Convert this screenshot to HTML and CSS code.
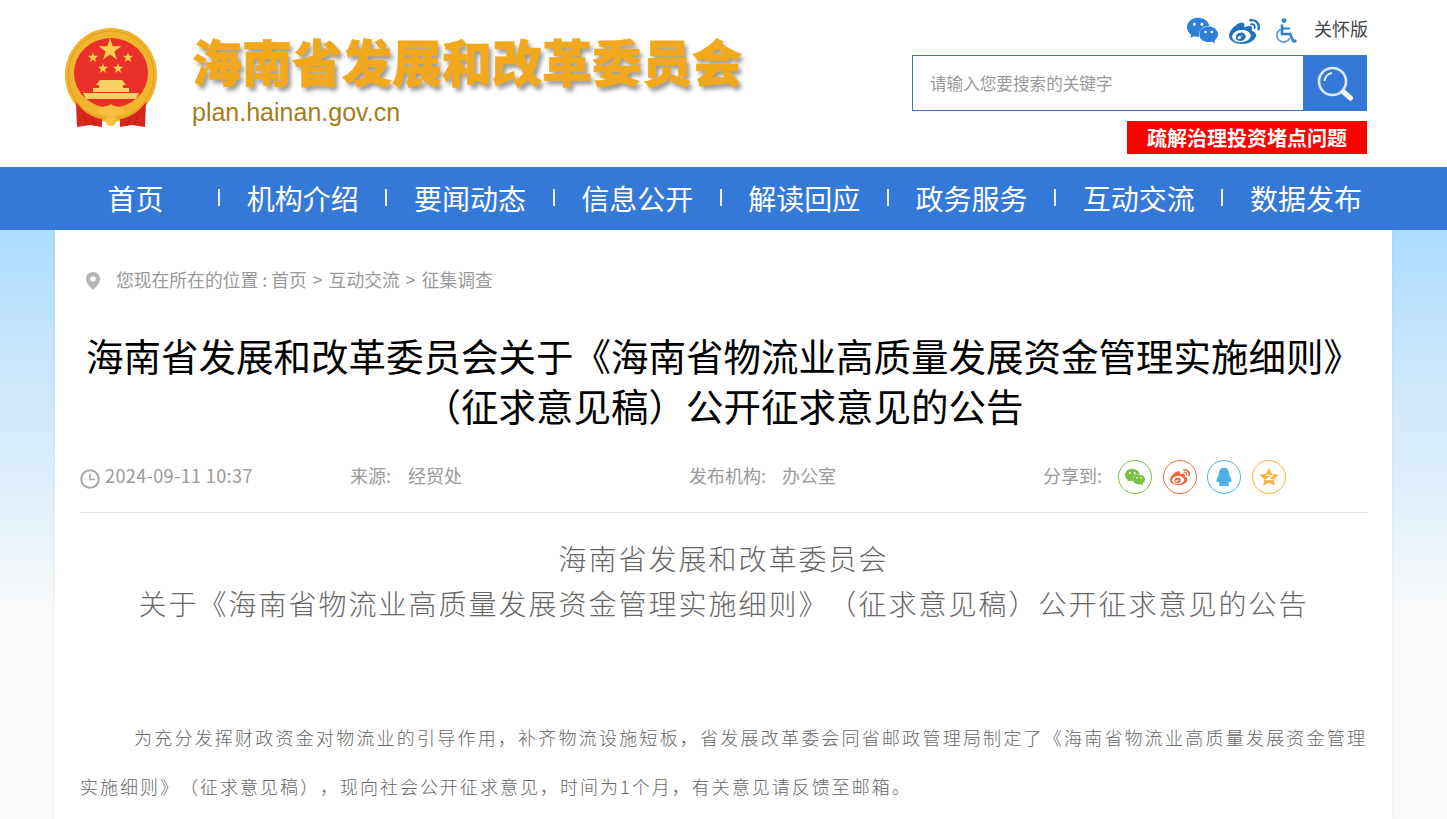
FILE: index.html
```html
<!DOCTYPE html>
<html lang="zh-CN">

<head>
    <meta charset="UTF-8" />
    <meta name="viewport" content="width=device-width, initial-scale=1.0" />
    <title>海南省发展和改革委员会</title>
    <link rel="stylesheet" href="styles.css">
</head>

<body>
    <div class="header">
        <div class="logo">
            <svg class="emblem" viewBox="0 0 94 100">
                <ellipse cx="47" cy="47" rx="46" ry="47" fill="#f2b32e" />
                <ellipse cx="47" cy="47" rx="43" ry="44" fill="none" stroke="#dd9a1c" stroke-width="1" />
                <ellipse cx="47" cy="45" rx="37" ry="35" fill="#e9302a" />
                <path d="M12 74 C20 85 30 90 38 91 L38 99 L26 97 L13 99 Z" fill="#d8261f" />
                <path d="M82 74 C74 85 64 90 56 91 L56 99 L68 97 L81 99 Z" fill="#d8261f" />
                <path d="M20 86 L23 97 M28 90 L31 98 M74 86 L71 97 M66 90 L63 98" fill="none" stroke="#b81c16" stroke-width="1" />
                <path d="M46 10 L48.7 18.3 L57.4 18.3 L50.4 23.4 L53 31.7 L46 26.6 L39 31.7 L41.6 23.4 L34.6 18.3 L43.3 18.3 Z" fill="#f7cf4a" />
                <path d="M29 24 L30.3 27.8 L34.2 27.8 L31.1 30.2 L32.2 34 L29 31.7 L25.8 34 L26.9 30.2 L23.8 27.8 L27.7 27.8 Z" fill="#f7cf4a" />
                <path d="M64 24 L65.3 27.8 L69.2 27.8 L66.1 30.2 L67.2 34 L64 31.7 L60.8 34 L61.9 30.2 L58.8 27.8 L62.7 27.8 Z" fill="#f7cf4a" />
                <path d="M39 35 L40.3 38.8 L44.2 38.8 L41.1 41.2 L42.2 45 L39 42.7 L35.8 45 L36.9 41.2 L33.8 38.8 L37.7 38.8 Z" fill="#f7cf4a" />
                <path d="M54 35 L55.3 38.8 L59.2 38.8 L56.1 41.2 L57.2 45 L54 42.7 L50.8 45 L51.9 41.2 L48.8 38.8 L52.7 38.8 Z" fill="#f7cf4a" />
                <path d="M36 52 H58 L62 57 H59 V60 H65 V64 H29 V60 H35 V57 H32 Z" fill="#f6d163" />
                <path d="M19 65 H75 L72 71 H22 Z" fill="#f6d163" />
                <path d="M33 84 C38 76 43 80 47 76 C51 80 56 76 61 84 C57 88 52 86 47 90 C42 86 37 88 33 84 Z" fill="#f5c13f" />
                <path d="M41 91 C44 88 50 88 53 91 C52 96 50 98 47 98 C44 98 42 96 41 91 Z" fill="#f5c13f" />
            </svg>
            <div class="logo-text">
                <div class="logo-title">海南省发展和改革委员会</div>
                <div class="logo-url">plan.hainan.gov.cn</div>
            </div>
        </div>

        <div class="header-right">
            <div class="top-tools">
                <svg class="tool-wechat" viewBox="0 0 24 24">
                    <path fill="#2e7fd6" d="M8.691 2.188C3.891 2.188 0 5.476 0 9.53c0 2.212 1.17 4.203 3.002 5.55a.59.59 0 0 1 .213.665l-.39 1.48c-.019.07-.048.141-.048.213 0 .163.13.295.29.295a.326.326 0 0 0 .167-.054l1.903-1.114a.864.864 0 0 1 .717-.098 10.16 10.16 0 0 0 2.837.403c.276 0 .543-.027.811-.05-.857-2.578.157-4.972 1.932-6.446 1.703-1.415 3.882-1.98 5.853-1.838-.576-3.583-4.196-6.348-8.596-6.348zM5.785 5.991c.642 0 1.162.529 1.162 1.18a1.17 1.17 0 0 1-1.162 1.178A1.17 1.17 0 0 1 4.623 7.17c0-.651.52-1.18 1.162-1.18zm5.813 0c.642 0 1.162.529 1.162 1.18a1.17 1.17 0 0 1-1.162 1.178 1.17 1.17 0 0 1-1.162-1.178c0-.651.52-1.18 1.162-1.18zm5.34 2.867c-1.797-.052-3.746.512-5.28 1.786-1.72 1.428-2.687 3.72-1.78 6.22.942 2.453 3.666 4.229 6.884 4.229.826 0 1.622-.12 2.361-.336a.722.722 0 0 1 .598.082l1.584.926a.272.272 0 0 0 .14.047c.134 0 .24-.111.24-.247 0-.06-.023-.12-.038-.177l-.327-1.233a.582.582 0 0 1-.023-.156.49.49 0 0 1 .201-.398C23.024 18.48 24 16.82 24 14.98c0-3.21-2.931-5.837-6.656-6.088V8.89c-.135-.01-.27-.027-.407-.03zm-2.53 3.274c.535 0 .969.44.969.982a.976.976 0 0 1-.969.983.976.976 0 0 1-.969-.983c0-.542.434-.982.97-.982zm4.844 0c.535 0 .969.44.969.982a.976.976 0 0 1-.969.983.976.976 0 0 1-.969-.983c0-.542.434-.982.969-.982z" />
                </svg>
                <svg class="tool-weibo" viewBox="0 0 24 24">
                    <path fill="#1f74bd" d="M10.098 20.323c-3.977.391-7.414-1.406-7.672-4.02-.259-2.609 2.759-5.047 6.74-5.441 3.979-.394 7.413 1.404 7.671 4.018.259 2.6-2.759 5.049-6.737 5.439l-.002.004zM9.05 17.219c-.384.616-1.208.884-1.829.602-.612-.279-.793-.991-.406-1.593.379-.595 1.176-.861 1.793-.601.622.263.82.972.442 1.592zm1.27-1.627c-.141.237-.449.353-.689.253-.236-.09-.313-.361-.177-.586.138-.227.436-.346.672-.24.239.09.315.36.18.601l.014-.028zm.176-2.719c-1.893-.493-4.033.45-4.857 2.118-.836 1.704-.026 3.591 1.886 4.21 1.983.64 4.318-.341 5.132-2.179.8-1.793-.201-3.642-2.161-4.149zm7.563-1.224c-.346-.105-.57-.18-.405-.615.375-.977.42-1.804 0-2.404-.781-1.112-2.915-1.053-5.364-.03 0 0-.766.331-.571-.271.376-1.217.315-2.224-.27-2.809-1.338-1.337-4.869.045-7.888 3.08C1.309 10.87 0 13.273 0 15.348c0 3.981 5.099 6.395 10.086 6.395 6.536 0 10.888-3.801 10.888-6.82 0-1.822-1.547-2.854-2.915-3.284v.01zm1.908-5.092c-.766-.856-1.908-1.187-2.96-.962-.436.09-.706.511-.616.932.09.42.511.691.932.602.511-.105 1.067.044 1.442.465.376.421.466.977.316 1.473-.136.406.089.856.51.992.405.119.857-.105.992-.512.33-1.021.12-2.178-.646-3.035l.03.045zm2.418-2.195c-1.576-1.757-3.905-2.419-6.054-1.968-.496.104-.812.587-.706 1.081.104.496.586.813 1.082.707 1.532-.331 3.185.15 4.296 1.383 1.112 1.246 1.429 2.943.947 4.416-.165.48.106 1.007.586 1.157.479.165.991-.104 1.157-.586.675-2.088.241-4.478-1.338-6.235l.03.045z" />
                </svg>
                <svg class="tool-access" viewBox="0 0 22 26">
                    <circle cx="8" cy="2.6" r="2.4" fill="#2e7fd6" />
                    <path d="M6 6.5 V16 H14 L17.5 23.5 L20.5 22.5" fill="none" stroke="#2e7fd6" stroke-width="2.6" />
                    <path d="M6.5 10.5 H14" fill="none" stroke="#2e7fd6" stroke-width="2" />
                    <path d="M4.6 11.5 A6.6 6.6 0 1 0 13.6 20" fill="none" stroke="#5b9be0" stroke-width="1.8" />
                </svg>
                <span class="care-link">关怀版</span>
            </div>
            <div class="search-box">
                <div class="search-input">请输入您要搜索的关键字</div>
                <div class="search-btn">
                    <svg viewBox="0 0 40 40" width="40" height="40">
                        <circle cx="17.5" cy="18.5" r="13.5" fill="none" stroke="#dbe9fa" stroke-width="2.6" />
                        <path d="M9.5 18 A8.5 8.5 0 0 1 17 10" fill="none" stroke="#dbe9fa" stroke-width="2" />
                        <path d="M28.5 29 L35.5 35" fill="none" stroke="#fff" stroke-width="5" stroke-linecap="round" />
                    </svg>
                </div>
            </div>
            <div class="notice-btn">疏解治理投资堵点问题</div>
        </div>
    </div>

    <div class="nav">
        <ul class="nav-list">
            <li><span>首页</span></li>
            <li><span>机构介绍</span></li>
            <li><span>要闻动态</span></li>
            <li><span>信息公开</span></li>
            <li><span>解读回应</span></li>
            <li><span>政务服务</span></li>
            <li><span>互动交流</span></li>
            <li><span>数据发布</span></li>
        </ul>
    </div>

    <div class="page-bg">
        <div class="main">
            <div class="crumb">
                <svg class="crumb-pin" viewBox="0 0 14 18">
                    <path fill-rule="evenodd" fill="#b5b5b5" d="M7 0 C3 0 0 3 0 7 C0 11 4 15 7 18 C10 15 14 11 14 7 C14 3 11 0 7 0 Z M7 4.2 A2.8 2.8 0 1 1 7 9.8 A2.8 2.8 0 1 1 7 4.2 Z" />
                </svg>
                <span>您现在所在的位置 : 首页<span class="crumb-sep">&gt;</span>互动交流<span class="crumb-sep">&gt;</span>征集调查</span>
            </div>

            <h1 class="article-title">海南省发展和改革委员会关于《海南省物流业高质量发展资金管理实施细则》（征求意见稿）公开征求意见的公告</h1>

            <div class="meta">
                <div class="meta-date">
                    <svg class="clock" viewBox="0 0 20 20">
                        <circle cx="10" cy="10" r="8.8" fill="#fff" stroke="#a8a8a8" stroke-width="2" />
                        <path d="M10 4.5 V10.5 H15" fill="none" stroke="#a8a8a8" stroke-width="1.6" />
                    </svg>
                    <span class="date-text">2024-09-11 10:37</span>
                </div>
                <div class="meta-source">来源:<span class="meta-value">经贸处</span></div>
                <div class="meta-org">发布机构:<span class="meta-value">办公室</span></div>
                <div class="share">
                    <span class="share-label">分享到:</span>
                    <div class="share-icon share-wechat">
                        <svg viewBox="0 0 24 24">
                            <path fill="#7ac143" d="M8.691 2.188C3.891 2.188 0 5.476 0 9.53c0 2.212 1.17 4.203 3.002 5.55a.59.59 0 0 1 .213.665l-.39 1.48c-.019.07-.048.141-.048.213 0 .163.13.295.29.295a.326.326 0 0 0 .167-.054l1.903-1.114a.864.864 0 0 1 .717-.098 10.16 10.16 0 0 0 2.837.403c.276 0 .543-.027.811-.05-.857-2.578.157-4.972 1.932-6.446 1.703-1.415 3.882-1.98 5.853-1.838-.576-3.583-4.196-6.348-8.596-6.348zM5.785 5.991c.642 0 1.162.529 1.162 1.18a1.17 1.17 0 0 1-1.162 1.178A1.17 1.17 0 0 1 4.623 7.17c0-.651.52-1.18 1.162-1.18zm5.813 0c.642 0 1.162.529 1.162 1.18a1.17 1.17 0 0 1-1.162 1.178 1.17 1.17 0 0 1-1.162-1.178c0-.651.52-1.18 1.162-1.18zm5.34 2.867c-1.797-.052-3.746.512-5.28 1.786-1.72 1.428-2.687 3.72-1.78 6.22.942 2.453 3.666 4.229 6.884 4.229.826 0 1.622-.12 2.361-.336a.722.722 0 0 1 .598.082l1.584.926a.272.272 0 0 0 .14.047c.134 0 .24-.111.24-.247 0-.06-.023-.12-.038-.177l-.327-1.233a.582.582 0 0 1-.023-.156.49.49 0 0 1 .201-.398C23.024 18.48 24 16.82 24 14.98c0-3.21-2.931-5.837-6.656-6.088V8.89c-.135-.01-.27-.027-.407-.03zm-2.53 3.274c.535 0 .969.44.969.982a.976.976 0 0 1-.969.983.976.976 0 0 1-.969-.983c0-.542.434-.982.97-.982zm4.844 0c.535 0 .969.44.969.982a.976.976 0 0 1-.969.983.976.976 0 0 1-.969-.983c0-.542.434-.982.969-.982z" />
                        </svg>
                    </div>
                    <div class="share-icon share-weibo">
                        <svg viewBox="0 0 24 24">
                            <path fill="#f0693a" d="M10.098 20.323c-3.977.391-7.414-1.406-7.672-4.02-.259-2.609 2.759-5.047 6.74-5.441 3.979-.394 7.413 1.404 7.671 4.018.259 2.6-2.759 5.049-6.737 5.439l-.002.004zM9.05 17.219c-.384.616-1.208.884-1.829.602-.612-.279-.793-.991-.406-1.593.379-.595 1.176-.861 1.793-.601.622.263.82.972.442 1.592zm1.27-1.627c-.141.237-.449.353-.689.253-.236-.09-.313-.361-.177-.586.138-.227.436-.346.672-.24.239.09.315.36.18.601l.014-.028zm.176-2.719c-1.893-.493-4.033.45-4.857 2.118-.836 1.704-.026 3.591 1.886 4.21 1.983.64 4.318-.341 5.132-2.179.8-1.793-.201-3.642-2.161-4.149zm7.563-1.224c-.346-.105-.57-.18-.405-.615.375-.977.42-1.804 0-2.404-.781-1.112-2.915-1.053-5.364-.03 0 0-.766.331-.571-.271.376-1.217.315-2.224-.27-2.809-1.338-1.337-4.869.045-7.888 3.08C1.309 10.87 0 13.273 0 15.348c0 3.981 5.099 6.395 10.086 6.395 6.536 0 10.888-3.801 10.888-6.82 0-1.822-1.547-2.854-2.915-3.284v.01zm1.908-5.092c-.766-.856-1.908-1.187-2.96-.962-.436.09-.706.511-.616.932.09.42.511.691.932.602.511-.105 1.067.044 1.442.465.376.421.466.977.316 1.473-.136.406.089.856.51.992.405.119.857-.105.992-.512.33-1.021.12-2.178-.646-3.035l.03.045zm2.418-2.195c-1.576-1.757-3.905-2.419-6.054-1.968-.496.104-.812.587-.706 1.081.104.496.586.813 1.082.707 1.532-.331 3.185.15 4.296 1.383 1.112 1.246 1.429 2.943.947 4.416-.165.48.106 1.007.586 1.157.479.165.991-.104 1.157-.586.675-2.088.241-4.478-1.338-6.235l.03.045z" />
                        </svg>
                    </div>
                    <div class="share-icon share-qq">
                        <svg viewBox="0 0 20 24">
                            <path fill="#4db1e8" d="M10 1 C5.8 1 4 4.2 4 8 C4 9 3.8 9.6 3.2 10.6 C2 12.6 1 15 1 17 C1 18.6 1.8 19 3.4 17.4 C3.8 18.6 4.4 19.5 5.2 20.2 C3.8 20.8 3.4 21.4 3.6 22 C4 23 7.6 23 10 22.4 C12.4 23 16 23 16.4 22 C16.6 21.4 16.2 20.8 14.8 20.2 C15.6 19.5 16.2 18.6 16.6 17.4 C18.2 19 19 18.6 19 17 C19 15 18 12.6 16.8 10.6 C16.2 9.6 16 9 16 8 C16 4.2 14.2 1 10 1 Z" />
                        </svg>
                    </div>
                    <div class="share-icon share-qzone">
                        <svg viewBox="0 0 24 24">
                            <path fill="#f7b23b" d="M12 1 L15.4 8.2 L23.4 9.2 L17.5 14.6 L19.1 22.5 L12 18.6 L4.9 22.5 L6.5 14.6 L0.6 9.2 L8.6 8.2 Z" />
                            <path d="M8 10 H16 L9.5 15 H16.5" fill="none" stroke="#fff" stroke-width="1.7" />
                        </svg>
                    </div>
                </div>
            </div>

            <div class="article-body">
                <p class="body-heading">海南省发展和改革委员会<br>关于《海南省物流业高质量发展资金管理实施细则》（征求意见稿）公开征求意见的公告</p>
                <p class="body-text">为充分发挥财政资金对物流业的引导作用，补齐物流设施短板，省发展改革委会同省邮政管理局制定了《海南省物流业高质量发展资金管理实施细则》（征求意见稿），现向社会公开征求意见，时间为1个月，有关意见请反馈至邮箱。</p>
            </div>
        </div>
    </div>
</body>

</html>
```

FILE: styles.css
```css
/* Base Styles */
body {
    margin: 0;
    background-color: #fff;
    font-family: "Noto Sans CJK SC", sans-serif;
    color: #333;
    text-spacing-trim: space-all;
}

/* Header */
.header {
    height: 167px;
    display: flex;
    justify-content: space-between;
    padding: 0 80px 0 64px;
    box-sizing: border-box;
}

.logo {
    display: flex;
    align-items: flex-start;
}

.emblem {
    width: 94px;
    height: 100px;
    margin-top: 28px;
}

.logo-text {
    margin-left: 34px;
    padding-top: 25px;
}

.logo-title {
    font-size: 50px;
    line-height: 70px;
    font-weight: 900;
    color: #f2a81d;
    -webkit-text-stroke: 0.6px #f2a81d;
    text-shadow: 3px 4px 4px #999;
    white-space: nowrap;
}

.logo-url {
    margin-top: 2px;
    font-family: "Liberation Sans", sans-serif;
    font-size: 25px;
    line-height: 30px;
    color: #a67c1c;
}

.header-right {
    display: flex;
    flex-direction: column;
    align-items: flex-end;
}

.top-tools {
    height: 55px;
    display: flex;
    align-items: flex-start;
}

.tool-wechat {
    width: 31px;
    height: 31px;
    margin-top: 15px;
}

.tool-weibo {
    width: 31px;
    height: 31px;
    margin: 16px 0 0 11px;
}

.tool-access {
    width: 22px;
    height: 26px;
    margin: 18px 0 0 16px;
}

.care-link {
    margin: 15px -1px 0 16px;
    font-size: 18px;
    line-height: 26px;
    color: #444;
}

.search-box {
    width: 455px;
    height: 56px;
    display: flex;
}

.search-input {
    flex: 1;
    padding-left: 17px;
    border: 1px solid #3c78b8;
    border-right: none;
    font-size: 16.6px;
    line-height: 54px;
    color: #999;
}

.search-btn {
    width: 64px;
    background-color: #3579d8;
    display: flex;
    justify-content: center;
    align-items: center;
}

.notice-btn {
    width: 240px;
    height: 33px;
    margin-top: 10px;
    background-color: #fe0000;
    color: #fff;
    font-size: 20px;
    font-weight: 700;
    line-height: 33px;
    text-align: center;
}

/* Nav */
.nav {
    height: 63px;
    background-color: #3579d8;
}

.nav-list {
    margin: 0;
    padding: 0 0 0 53px;
    list-style: none;
    display: grid;
    grid-template-columns: repeat(8, 167.2px);
}

.nav-list li {
    height: 61px;
    padding-bottom: 2px;
    display: flex;
    align-items: center;
}

.nav-list li span {
    flex: 1;
    text-align: center;
    color: #fff;
    font-size: 28px;
}

.nav-list li::after {
    content: "";
    width: 2px;
    height: 17px;
    background-color: #e8f0fb;
}

.nav-list li:last-child::after {
    background-color: transparent;
}

/* Content */
.page-bg {
    height: 589px;
    overflow: hidden;
    background: linear-gradient(#aedcff, #f8f9f9 380px);
}

.main {
    width: 1337px;
    height: 589px;
    margin-left: 55px;
    padding: 0 25px;
    box-sizing: border-box;
    background-color: #fff;
    box-shadow: 0 0 6px rgba(0, 0, 0, 0.05);
}

.crumb {
    height: 100px;
    padding: 35px 0 0 6px;
    box-sizing: border-box;
    display: flex;
    align-items: flex-start;
    font-size: 17.8px;
    line-height: 28px;
    color: #999;
}

.crumb-pin {
    width: 14px;
    height: 18px;
    margin: 7px 16px 0 0;
}

.crumb-sep {
    margin: 0 6px;
}

.article-title {
    margin: 0;
    font-size: 37.5px;
    font-weight: 400;
    line-height: 50px;
    color: #000;
    text-align: center;
}

.meta {
    height: 83px;
    padding-top: 30px;
    box-sizing: border-box;
    display: flex;
    align-items: flex-start;
    border-bottom: 1px solid #e6e6e6;
    font-size: 18px;
    line-height: 30px;
    color: #999;
}

.meta-date {
    width: 270px;
    display: flex;
    align-items: flex-start;
}

.date-text {
    letter-spacing: 0.4px;
}

.clock {
    width: 20px;
    height: 20px;
    margin: 9px 5px 0 0;
}

.meta-source {
    width: 339px;
}

.meta-org {
    width: 354px;
}

.meta-value {
    margin-left: 17px;
}

.meta-org .meta-value {
    margin-left: 16px;
}

.share {
    display: flex;
    align-items: flex-start;
}

.share-label {
    width: 75px;
}

.share-icon {
    width: 34px;
    height: 34px;
    margin-right: 10.7px;
    border: 1px solid #ccc;
    border-radius: 50%;
    box-sizing: border-box;
    display: flex;
    justify-content: center;
    align-items: center;
}

.share-icon svg {
    width: 20px;
    height: 20px;
}

.share-wechat {
    border-color: #7ac143;
}

.share-weibo {
    border-color: #f0693a;
}

.share-qq {
    border-color: #4db1e8;
}

.share-qzone {
    border-color: #f7b23b;
}

.body-heading {
    margin: 23px 0 0;
    font-size: 28px;
    font-weight: 300;
    letter-spacing: 2px;
    line-height: 45px;
    color: #666;
    text-align: center;
}

.body-text {
    margin: 87px 0 0;
    font-size: 18px;
    font-weight: 300;
    letter-spacing: 2px;
    line-height: 49px;
    color: #666;
    text-align: justify;
    text-indent: 54px;
}
```
